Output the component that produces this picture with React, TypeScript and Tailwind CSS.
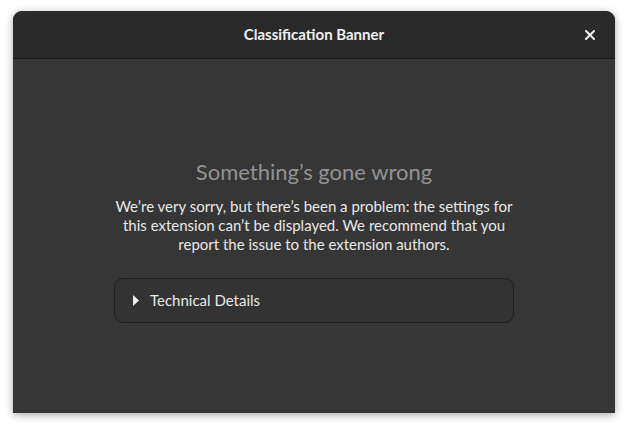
import React from 'react';

const App: React.FC = () => {
  return (
    <div className="w-[628px] h-[429px] bg-white pt-[11px] pl-[13px]" style={{ fontFamily: 'Lato, "Noto Sans", sans-serif' }}>
      <div className="w-[602px] h-[402px] flex flex-col rounded-t-[9px] overflow-hidden bg-[#363636] shadow-[0_2px_8px_rgba(0,0,0,0.35)]">
        {/* header bar */}
        <div className="h-[48px] shrink-0 relative flex items-center justify-center bg-[#2a2a2a] border-b border-[#1b1b1b]">
          <span className="text-[15px] font-bold text-[#f0f0f0]">Classification Banner</span>
          <button className="absolute right-[18px] top-[17px] w-[14px] h-[14px] flex items-center justify-center text-[#f0f0f0]">
            <svg width="10" height="10" viewBox="0 0 10 10">
              <path d="M1 1 L9 9 M9 1 L1 9" stroke="currentColor" strokeWidth="2" strokeLinecap="square" />
            </svg>
          </button>
        </div>

        {/* body */}
        <div className="flex-1 flex flex-col items-center pt-[99px]">
          <h1 className="text-[22px] leading-[28px] text-[#939393]">Something’s gone wrong</h1>
          <p className="mt-[11px] w-[420px] text-center text-[15px] leading-[19px] text-[#e8e8e8]">
            We’re very sorry, but there’s been a problem: the settings for this extension can’t be displayed. We recommend that you report the issue to the extension authors.
          </p>
          <div className="mt-[24px] w-[400px] h-[45px] flex items-center rounded-[9px] border border-[#1f1f1f] bg-[#333333] pl-[18px]">
            <svg width="6" height="11" viewBox="0 0 6 11" className="text-[#eeeeee]">
              <path d="M0 0 L6 5.5 L0 11 Z" fill="currentColor" />
            </svg>
            <span className="ml-[11px] text-[15px] text-[#e8e8e8]">Technical Details</span>
          </div>
        </div>
      </div>
    </div>
  );
};

export default App;
